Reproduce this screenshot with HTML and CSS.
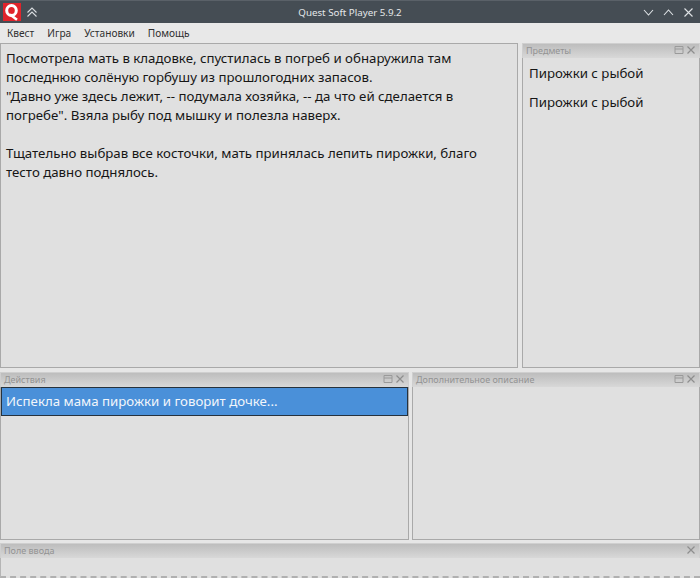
FILE: index.html
```html
<!DOCTYPE html>
<html lang="ru">
<head>
<meta charset="utf-8">
<title>Quest Soft Player 5.9.2</title>
<link rel="stylesheet" href="styles.css">
</head>
<body>
<div class="window">
  <header class="titlebar">
    <div class="tb-left">
      <svg class="logo" width="18" height="18" viewBox="0 0 18 18"><rect width="18" height="18" fill="#e0242b"/><ellipse cx="8.500" cy="7.500" rx="4.800" ry="5" fill="none" stroke="#fff" stroke-width="3"/><path d="M7 11.500 L14 16.800" stroke="#fff" stroke-width="2.600"/></svg>
      <svg class="ic" width="12" height="12" viewBox="0 0 12 12"><path d="M1.500 6.500 6 2l4.500 4.500M1.500 10.500 6 6l4.500 4.500" fill="none" stroke="#d8dcdf" stroke-width="1.100"/></svg>
    </div>
    <div class="tb-title">Quest Soft Player 5.9.2</div>
    <div class="tb-right">
      <svg width="11" height="11" viewBox="0 0 11 11"><path d="M1 3l4.500 5L10 3" fill="none" stroke="#dfe3e6" stroke-width="1.100"/></svg>
      <svg width="11" height="11" viewBox="0 0 11 11"><path d="M1 8l4.500-5L10 8" fill="none" stroke="#dfe3e6" stroke-width="1.100"/></svg>
      <svg width="11" height="11" viewBox="0 0 11 11"><path d="M1.500 1.500l8 8M9.500 1.500l-8 8" fill="none" stroke="#dfe3e6" stroke-width="1.100"/></svg>
    </div>
  </header>
  <nav class="menu"><span>Квест</span><span>Игра</span><span>Установки</span><span>Помощь</span></nav>
  <main class="docks">
    <div class="row row-top">
      <section class="pane pane-story">
        <p>Посмотрела мать в кладовке, спустилась в погреб и обнаружила там<br>последнюю солёную горбушу из прошлогодних запасов.<br>"Давно уже здесь лежит, -- подумала хозяйка, -- да что ей сделается в<br>погребе". Взяла рыбу под мышку и полезла наверх.</p>
        <p>Тщательно выбрав все косточки, мать принялась лепить пирожки, благо<br>тесто давно поднялось.</p>
      </section>
      <section class="dock dock-items">
        <div class="dock-head"><span>Предметы</span><span class="dock-btns"><svg width="10" height="10" viewBox="0 0 10 10"><path d="M1 1.500h8v7H1zM1 4h8" fill="none" stroke="#9a9a9a"/></svg><svg width="10" height="10" viewBox="0 0 10 10"><path d="M1.500 1.500l7 7M8.500 1.500l-7 7" fill="none" stroke="#8e8e8e" stroke-width="1.200"/></svg></span></div>
        <div class="pane items"><div>Пирожки с рыбой</div><div>Пирожки с рыбой</div></div>
      </section>
    </div>
    <div class="row row-mid">
      <section class="dock dock-actions">
        <div class="dock-head"><span>Действия</span><span class="dock-btns"><svg width="10" height="10" viewBox="0 0 10 10"><path d="M1 1.500h8v7H1zM1 4h8" fill="none" stroke="#9a9a9a"/></svg><svg width="10" height="10" viewBox="0 0 10 10"><path d="M1.500 1.500l7 7M8.500 1.500l-7 7" fill="none" stroke="#8e8e8e" stroke-width="1.200"/></svg></span></div>
        <div class="pane"><div class="selected">Испекла мама пирожки и говорит дочке...</div></div>
      </section>
      <section class="dock dock-extra">
        <div class="dock-head"><span>Дополнительное описание</span><span class="dock-btns"><svg width="10" height="10" viewBox="0 0 10 10"><path d="M1 1.500h8v7H1zM1 4h8" fill="none" stroke="#9a9a9a"/></svg><svg width="10" height="10" viewBox="0 0 10 10"><path d="M1.500 1.500l7 7M8.500 1.500l-7 7" fill="none" stroke="#8e8e8e" stroke-width="1.200"/></svg></span></div>
        <div class="pane"></div>
      </section>
    </div>
    <section class="dock dock-input">
      <div class="dock-head"><span>Поле ввода</span><span class="dock-btns"><svg width="10" height="10" viewBox="0 0 10 10"><path d="M1.500 1.500l7 7M8.500 1.500l-7 7" fill="none" stroke="#8e8e8e" stroke-width="1.200"/></svg></span></div>
      <div class="input-body"></div>
    </section>
  </main>
</div>
</body>
</html>
```
FILE: styles.css
```css
* { box-sizing: border-box; }
html, body { margin: 0; height: 100%; }
body { background: #e6e6e6; font-family: "Noto Sans", sans-serif; color: #161616; overflow: hidden; }
.window { width: 700px; height: 578px; display: flex; flex-direction: column; }
.titlebar { height: 23px; flex: none; background: #454d54; color: #e4e7e9; display: flex; align-items: center; justify-content: space-between; position: relative; padding: 0 6px 0 3px; border-top: 1px solid #5a6168; }
.tb-left { display: flex; align-items: center; gap: 5px; }
.tb-right { display: flex; align-items: center; gap: 9px; }
.tb-right svg, .tb-left svg { display: block; }
.tb-title { position: absolute; left: 0; right: 0; text-align: center; font-size: 9.750px; }
.menu { height: 20px; flex: none; background: #e8e8e8; display: flex; align-items: center; gap: 13px; padding: 0 7px; font-size: 10.150px; color: #303030; }
.docks { flex: 1; display: flex; flex-direction: column; background: #e6e6e6; min-height: 0; }
.row { display: flex; }
.row-top { height: 325px; flex: none; gap: 4px; }
.row-mid { height: 168px; flex: none; margin-top: 4px; gap: 3px; }
.pane { background: #e0e0e0; border: 1px solid #a9a9a9; min-height: 0; }
.pane-story { width: 518px; flex: none; padding: 5px 5px; font-size: 13.250px; line-height: 19px; }
.pane-story p { margin: 0 0 19px; white-space: nowrap; }
.dock { display: flex; flex-direction: column; min-width: 0; }
.dock .pane { flex: 1; border-top: none; }
.dock-items { flex: 1; }
.dock-actions { width: 409px; flex: none; }
.dock-extra { flex: 1; }
.dock-head { height: 15px; flex: none; background: linear-gradient(#bdbdbd, #d8d8d8); display: flex; justify-content: space-between; align-items: center; padding: 0 3px 2px 3px; font-size: 9px; color: #939393; border: 1px solid #cfcfcf; border-bottom: none; }
.dock-btns { display: flex; gap: 2px; }
.dock-btns svg { display: block; }
.items { padding: 6px 6px 0; font-size: 13.250px; line-height: 19px; }
.items div { margin-bottom: 10px; }
.selected { height: 29px; background: #4a90d9; color: #f2f6fb; border: 1px solid #26323d; font-size: 13.250px; line-height: 27px; padding: 0 4px; }
.dock-input { flex: 1; margin-top: 3px; min-height: 0; }
.input-body { flex: 1; background: #e0e0e0; border-left: 1px solid #b5b5b5; border-bottom: 2px dashed #b0b0b0; }
```
